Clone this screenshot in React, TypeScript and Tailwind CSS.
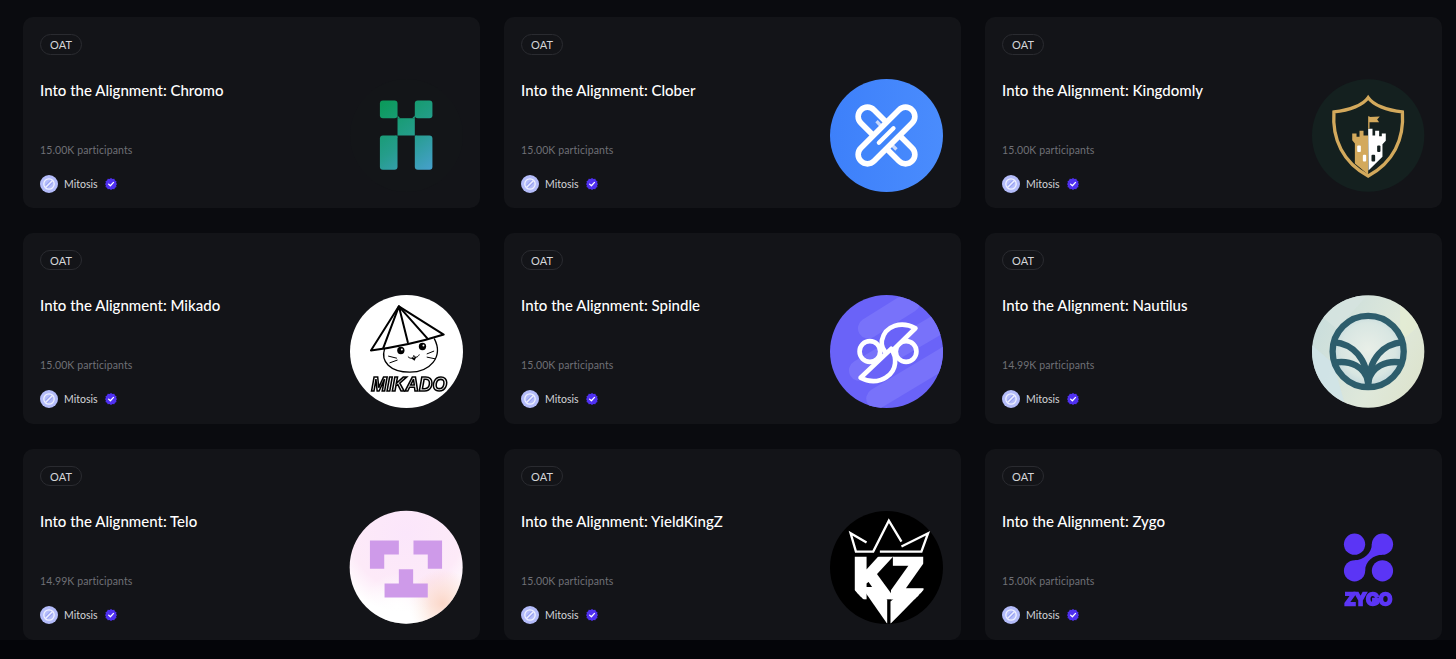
import React from 'react';

const Chromo = () => (
    <svg viewBox="30 28 340 340" className="w-full h-full overflow-visible">
        <defs>
            <linearGradient id="chromoGrad" gradientUnits="userSpaceOnUse" x1="120" y1="93" x2="277" y2="300">
                <stop offset="0" stopColor="#0a9a58" />
                <stop offset="0.55" stopColor="#259d8c" />
                <stop offset="1" stopColor="#46a0cc" />
            </linearGradient>
        </defs>
        <circle cx="200" cy="198" r="170" fill="#131518" />
        <g fill="url(#chromoGrad)">
            <rect x="120" y="93" width="53" height="53" rx="9" />
            <rect x="225" y="93" width="53" height="53" rx="9" />
            <rect x="120" y="198" width="53" height="103" rx="9" />
            <rect x="225" y="198" width="53" height="103" rx="9" />
            <rect x="173" y="146" width="52" height="52" />
            <path d="M173 146 L181 146 L173 138Z M225 146 L217 146 L225 138Z M173 198 L165 198 L173 206Z M225 198 L233 198 L225 206Z" />
        </g>
    </svg>
);

const Clober = () => (
    <svg viewBox="33 28 340 340" className="w-full h-full overflow-visible">
        <defs>
            <linearGradient id="cloberGrad" x1="0" y1="0" x2="1" y2="0">
                <stop offset="0" stopColor="#3d80fa" />
                <stop offset="1" stopColor="#4a8cfd" />
            </linearGradient>
        </defs>
        <circle cx="200" cy="198" r="170" fill="url(#cloberGrad)" />
        <rect x="91" y="170" width="218" height="56" rx="28" transform="rotate(45 200 198)" fill="none" stroke="#ffffff" strokeWidth="17" />
        <path d="M170 155 L186 172 M214 224 L230 240" stroke="#c9d9fb" strokeWidth="10" />
        <rect x="91" y="170" width="218" height="56" rx="28" transform="rotate(-45 200 198)" fill="#4085fb" stroke="#ffffff" strokeWidth="17" />
        <path d="M177 220 L221 176" stroke="#ffffff" strokeWidth="13" strokeLinecap="round" />
    </svg>
);

const Kingdomly = () => (
    <svg viewBox="36 28 340 340" className="w-full h-full overflow-visible">
        <circle cx="205" cy="198" r="169" fill="#14201f" />
        <path d="M205 84 C190 106 150 122 102 127 C96 210 130 280 205 320 C280 280 314 210 308 127 C260 122 220 106 205 84Z" fill="none" stroke="#d3a95c" strokeWidth="10" />
        <path d="M205 178 V315 L165 282 V222 L157 212 V192 L170 192 V202 L179 202 V184 L191 184 V198 L205 198Z" fill="#d3a95c" />
        <path d="M205 178 L218 178 V198 L226 198 V184 L238 184 V200 L246 200 V192 L258 192 V214 L248 224 V262 L206 303Z" fill="#ffffff" />
        <path d="M205 178 V140 H209 V142 L240 141 L232 150 L238 158 L209 158 V178Z" fill="#d3a95c" />
        <rect x="172" y="228" width="11" height="20" rx="3" fill="#ffffff" />
        <rect x="189" y="256" width="10" height="20" rx="3" fill="#ffffff" />
        <rect x="232" y="228" width="10" height="20" rx="3" fill="#14201f" />
        <rect x="215" y="256" width="11" height="20" rx="3" fill="#14201f" />
    </svg>
);

const Mikado = () => (
    <svg viewBox="30 28 340 340" className="w-full h-full overflow-visible will-change-transform">
        <circle cx="200" cy="198" r="170" fill="#ffffff" />
        <g fill="none" stroke="#000000" strokeWidth="6" strokeLinejoin="round" strokeLinecap="round">
            <path d="M177 62 L93 195 C170 185 240 170 312 147Z" />
            <path d="M177 62 L130 188 M177 62 L204 170 M177 62 L262 158" />
            <path d="M134 190 C122 228 150 260 210 260 C270 260 312 215 284 160" strokeWidth="4" />
            <path d="M146 212 L170 218 M150 232 L172 224 M262 205 L282 197 M262 215 L286 220" strokeWidth="3" />
            <path d="M205 214 C212 222 220 218 222 210 C226 218 234 216 238 208" strokeWidth="3" />
        </g>
        <circle cx="183" cy="195" r="11" fill="#000000" />
        <circle cx="248" cy="183" r="11" fill="#000000" />
        <circle cx="186" cy="192" r="3" fill="#ffffff" />
        <circle cx="251" cy="180" r="3" fill="#ffffff" />
        <path d="M214 218 L230 214 L224 226Z" fill="#000000" />
        <text x="208" y="316" textAnchor="middle" fontFamily="'Liberation Sans', sans-serif" fontWeight="700" fontStyle="italic" fontSize="60" fill="#ffffff" stroke="#000000" strokeWidth="5" textLength="228" lengthAdjust="spacingAndGlyphs">MIKADO</text>
    </svg>
);

const Spindle = () => (
    <svg viewBox="33 28 340 340" className="w-full h-full overflow-visible">
        <defs>
            <clipPath id="spindleClip">
                <circle cx="200" cy="198" r="170" />
            </clipPath>
        </defs>
        <circle cx="200" cy="198" r="170" fill="#6a63f8" />
        <g clipPath="url(#spindleClip)" stroke="#7872fa" strokeWidth="62" strokeLinecap="round">
            <path d="M145 128 L270 50" />
            <path d="M118 255 L400 90" />
            <path d="M170 340 L420 190" />
        </g>
        <g fill="none" stroke="#ffffff" strokeWidth="14" strokeLinejoin="round">
            <circle cx="150" cy="198" r="31" />
            <circle cx="259" cy="198" r="31" />
            <path d="M287 128 C245 105 195 120 186 165 C183 182 190 195 205 208Z" fill="#6a63f8" />
            <path d="M122 277 L214 190 C232 215 232 255 200 275 C175 292 145 290 122 277Z" fill="#6a63f8" />
        </g>
    </svg>
);

const Nautilus = () => (
    <svg viewBox="35 28 340 340" className="w-full h-full overflow-visible">
        <defs>
            <linearGradient id="nautilusGrad" x1="0" y1="0.1" x2="1" y2="0.6">
                <stop offset="0" stopColor="#c7dcdc" />
                <stop offset="0.7" stopColor="#dfe8da" />
                <stop offset="1" stopColor="#dde4cf" />
            </linearGradient>
            <radialGradient id="nautilusGlow" cx="0.5" cy="0.48" r="0.5">
                <stop offset="0" stopColor="#e9efe8" />
                <stop offset="0.75" stopColor="#d8e6e2" />
                <stop offset="1" stopColor="#c3d8dc" />
            </radialGradient>
            <clipPath id="nautilusClip">
                <circle cx="204" cy="198" r="169" />
            </clipPath>
        </defs>
        <circle cx="204" cy="198" r="169" fill="url(#nautilusGrad)" />
        <g clipPath="url(#nautilusClip)">
            <path d="M30 175 L100 235 L140 380 L30 380Z" fill="#cfe4e8" opacity="0.8" />
            <path d="M300 40 L380 100 L300 170Z" fill="#e4ecd2" opacity="0.8" />
            <path d="M60 90 L130 30 L200 30 L110 130Z" fill="#d6e4e0" opacity="0.8" />
        </g>
        <circle cx="204" cy="198" r="110" fill="url(#nautilusGlow)" />
        <g fill="none" stroke="#2d5d6c" strokeWidth="19">
            <circle cx="204" cy="198" r="107" />
            <path d="M100 170 C155 175 204 215 204 305" />
            <path d="M308 170 C253 175 204 215 204 305" />
            <path d="M100 232 C150 222 195 245 204 290" />
            <path d="M308 232 C258 222 213 245 204 290" />
        </g>
    </svg>
);

const Telo = () => (
    <svg viewBox="30 33 340 340" className="w-full h-full overflow-visible">
        <defs>
            <radialGradient id="teloPink" cx="0.5" cy="0.2" r="0.7">
                <stop offset="0" stopColor="#fbe6fb" />
                <stop offset="0.7" stopColor="#fdeaf8" />
                <stop offset="1" stopColor="#ffffff" />
            </radialGradient>
            <radialGradient id="teloPeach" cx="0.82" cy="0.82" r="0.3">
                <stop offset="0" stopColor="#fbd5c6" stopOpacity="0.95" />
                <stop offset="1" stopColor="#fbd5c6" stopOpacity="0" />
            </radialGradient>
            <radialGradient id="teloWhite" cx="0.42" cy="0.85" r="0.3">
                <stop offset="0" stopColor="#ffffff" />
                <stop offset="1" stopColor="#ffffff" stopOpacity="0" />
            </radialGradient>
        </defs>
        <circle cx="199" cy="202" r="170" fill="url(#teloPink)" />
        <circle cx="199" cy="202" r="170" fill="url(#teloPeach)" />
        <circle cx="199" cy="202" r="170" fill="url(#teloWhite)" />
        <g fill="#ce9ae9">
            <path d="M90 122 H177 V164 H133 V207 H90Z" />
            <path d="M221 122 H307 V207 H264 V164 H221Z" />
            <path d="M177 208 H220 V251 H264 V293 H134 V251 H177Z" />
        </g>
    </svg>
);

const YieldKingZ = () => (
    <svg viewBox="33 33 340 340" className="w-full h-full overflow-visible will-change-transform">
        <defs>
            <clipPath id="kzClip">
                <path d="M103 170 H312 V270 L214 372 H200 L103 270Z" />
            </clipPath>
        </defs>
        <circle cx="200" cy="203" r="170" fill="#000000" />
        <g fill="none" stroke="#ffffff" strokeWidth="7">
            <path d="M140 128 L92 100 L108 155 H160 L207 62 L245 125" />
            <path d="M245 140 L325 100 L305 155 H180" />
        </g>
        <g clipPath="url(#kzClip)" fill="#ffffff" stroke="#ffffff">
            <text x="100" y="292" fontFamily="'Liberation Sans', sans-serif" fontWeight="700" fontSize="175" strokeWidth="14" textLength="212" lengthAdjust="spacingAndGlyphs">KZ</text>
            <path d="M125 262 L170 262 L202 300 V372 Z" stroke="none" />
            <path d="M212 372 V305 L236 285 H300 Z" stroke="none" />
        </g>
    </svg>
);

const Zygo = () => (
    <svg viewBox="30 33 340 340" className="w-full h-full overflow-visible will-change-transform">
        <g fill="#5b35f5">
            <circle cx="158" cy="133" r="32" />
            <circle cx="242" cy="213" r="32" />
            <circle cx="158" cy="213" r="32" />
            <circle cx="242" cy="133" r="32" />
            <path d="M210 133 C210 160 185 181 158 181 L190 213 C190 185 215 165 242 165Z" />
        </g>
        <text x="200" y="316" textAnchor="middle" fontFamily="'Liberation Sans', sans-serif" fontWeight="700" fontSize="52" fill="#5b35f5" stroke="#5b35f5" strokeWidth="7" textLength="142" lengthAdjust="spacingAndGlyphs">ZYGO</text>
    </svg>
);

const MitosisAvatar = () => (
    <svg viewBox="0 0 18 18" className="w-[18px] h-[18px] shrink-0">
        <circle cx="9" cy="9" r="9" fill="#b4bcfa" />
        <circle cx="9" cy="9" r="5.2" fill="none" stroke="#eef0ff" strokeWidth="1.3" />
        <path d="M5.6 12.4 L12.4 5.6" stroke="#eef0ff" strokeWidth="1.3" />
        <path d="M7.6 12.6 L12.6 7.6 M5.4 10.4 L10.4 5.4" stroke="#8f98ee" strokeWidth="0.9" />
    </svg>
);

const VerifiedBadge = () => (
    <svg viewBox="0 0 12 12" className="w-3 h-3 shrink-0">
        <path d="M6 0 L7.5 1 L9.3 .8 L10 2.4 L11.5 3.3 L11.1 5 L12 6 L11.1 7.4 L11.5 8.9 L10 9.7 L9.3 11.2 L7.5 11 L6 12 L4.5 11 L2.7 11.2 L2 9.7 L.5 8.9 L.9 7.4 L0 6 L.9 5 L.5 3.3 L2 2.4 L2.7 .8 L4.5 1Z" fill="#4f30f0" />
        <path d="M3.6 6.1 L5.4 7.8 L8.5 4.4" fill="none" stroke="#ffffff" strokeWidth="1.3" strokeLinecap="round" strokeLinejoin="round" />
    </svg>
);

const CARDS = [
    { name: 'Chromo', count: '15.00K', Logo: Chromo },
    { name: 'Clober', count: '15.00K', Logo: Clober },
    { name: 'Kingdomly', count: '15.00K', Logo: Kingdomly },
    { name: 'Mikado', count: '15.00K', Logo: Mikado },
    { name: 'Spindle', count: '15.00K', Logo: Spindle },
    { name: 'Nautilus', count: '14.99K', Logo: Nautilus },
    { name: 'Telo', count: '14.99K', Logo: Telo },
    { name: 'YieldKingZ', count: '15.00K', Logo: YieldKingZ },
    { name: 'Zygo', count: '15.00K', Logo: Zygo },
];

export default function App() {
    return (
        <div className="h-[659px] w-[1456px] overflow-hidden bg-[#040509] font-['Lato',sans-serif]">
            <div className="h-[640px] bg-[#0a0b0f] pt-[17px] pl-[23px] pr-[14px]">
                <div className="h-full grid grid-cols-3 grid-rows-3 gap-x-6 gap-y-[24.5px]">
                    {CARDS.map(({ name, count, Logo }) => (
                        <div key={name} className="bg-[#131418] rounded-[10px] pt-[17px] pb-4 pl-[17px] pr-[17px] flex justify-between">
                            <div className="flex flex-col items-start">
                                <span className="h-[25px] w-[42px] pt-[2px] rounded-full border border-[#2a2b30] flex items-center justify-center text-[11px] text-[#d4d5d8]">OAT</span>
                                <div className="mt-[25px] text-[15px] leading-[20px] font-medium text-white">Into the Alignment: {name}</div>
                                <div className="mt-[42px] text-[10.5px] leading-[16px] tracking-[0.01em] text-[#6f7076]">{count} participants</div>
                                <div className="mt-[17px] flex items-center">
                                    <MitosisAvatar />
                                    <span className="ml-1.5 text-[10.5px] leading-[18px] text-[#d4d5d8]">Mitosis</span>
                                    <span className="ml-[7px]"><VerifiedBadge /></span>
                                </div>
                            </div>
                            <div className="self-end w-[113px] h-[113px] shrink-0">
                                <Logo />
                            </div>
                        </div>
                    ))}
                </div>
            </div>
        </div>
    );
}
